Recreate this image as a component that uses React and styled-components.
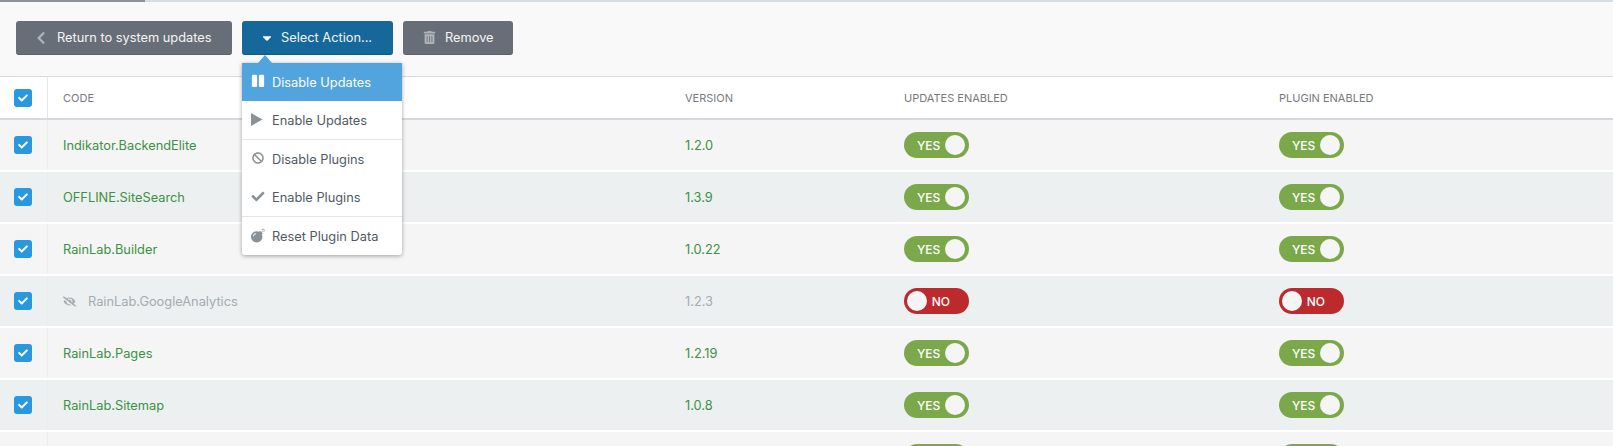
import React from 'react'
import styled, { createGlobalStyle } from 'styled-components'
import {
  FaBan,
  FaBomb,
  FaCaretDown,
  FaCheck,
  FaChevronLeft,
  FaEyeSlash,
  FaPause,
  FaTrashAlt,
} from 'react-icons/fa'

const GlobalStyle = createGlobalStyle`
  html, body {
    margin: 0;
    padding: 0;
    height: 446px;
    overflow: hidden;
    background: #f5f5f5;
    font-family: Inter, "Liberation Sans", sans-serif;
  }
`

const Progress = styled.div`
  display: flex;
  height: 2px;
  background: #d6dde6;
  span {
    width: 145px;
    background: #8f939c;
  }
`

const Toolbar = styled.div`
  display: flex;
  gap: 10px;
  height: 75px;
  padding: 19px 0 0 16px;
  box-sizing: border-box;
  background: #f9f9f9;
  border-bottom: 1px solid #d7dadd;
`

const Button = styled.button`
  display: flex;
  align-items: center;
  width: ${p => p.$width}px;
  height: 34px;
  padding: 0 0 0 ${p => p.$pad}px;
  gap: ${p => p.$gap}px;
  border: 0;
  border-bottom: 1px solid ${p => (p.$primary ? '#125a86' : '#5b616a')};
  border-radius: 3px;
  background: ${p => (p.$primary ? '#16689a' : '#686e78')};
  color: #f4f5f6;
  font: 400 12.8px Inter, "Liberation Sans", sans-serif;
  white-space: nowrap;
  svg {
    flex: none;
    color: ${p => (p.$primary ? '#ffffff' : '#b0b4ba')};
  }
`

const ActionWrap = styled.div`
  position: relative;
`

const Dropdown = styled.div`
  position: absolute;
  z-index: 5;
  top: 42px;
  left: 0;
  width: 160px;
  background: #fff;
  border-radius: 0 0 3px 3px;
  box-shadow: 0 1px 4px rgba(0, 0, 0, 0.35);
  &::before {
    content: '';
    position: absolute;
    top: -8px;
    left: 16px;
    border-left: 7px solid transparent;
    border-right: 7px solid transparent;
    border-bottom: 8px solid #51a4de;
  }
`

const MenuItem = styled.div`
  display: flex;
  align-items: center;
  height: 38px;
  padding-left: 9px;
  background: ${p => (p.$active ? '#51a4de' : 'transparent')};
  color: ${p => (p.$active ? '#ffffff' : '#4f5a65')};
  font-size: 12.8px;
  border-top: ${p => (p.$divided ? '1px solid #e3e5e7' : '0')};
  svg {
    flex: none;
    width: 14px;
    margin: -2px 7px 0 0;
    color: ${p => (p.$active ? '#ffffff' : '#8a9298')};
  }
`

const Columns = styled.div`
  display: grid;
  grid-template-columns: 48px 622px 219px 375px 1fr;
`

const Header = styled(Columns)`
  height: 41px;
  background: #fff;
  border-bottom: 2px solid #d5d9dd;
`

const HeadCell = styled.div`
  display: flex;
  align-items: center;
  padding-left: 15px;
  color: #777a7d;
  font-size: 11px;
  text-transform: uppercase;
`

const Row = styled(Columns)`
  height: 50px;
  border-bottom: 2px solid #fff;
  background: ${p => (p.$alt ? '#ecf0f1' : '#f5f5f5')};
`

const CheckCell = styled.div`
  display: flex;
  align-items: center;
  padding-left: 14px;
  border-right: 1px solid ${p => (p.$head ? '#e6e6e6' : '#ececec')};
`

const Checkbox = styled.span`
  display: flex;
  align-items: center;
  justify-content: center;
  width: 18px;
  height: 18px;
  border-radius: 3px;
  background: #2a98de;
  color: #fff;
`

const Cell = styled.div`
  display: flex;
  align-items: center;
  gap: 12px;
  padding-left: 15px;
  color: ${p => (p.$muted ? '#a4acaf' : '#3c9143')};
  font-size: 12.8px;
  svg {
    color: #a4acaf;
  }
`

const Switch = styled.span`
  display: flex;
  align-items: center;
  flex-direction: ${p => (p.$on ? 'row' : 'row-reverse')};
  justify-content: space-between;
  box-sizing: border-box;
  width: 65px;
  height: 26px;
  padding: ${p => (p.$on ? '0 4px 0 13px' : '0 19px 0 3px')};
  border-radius: 13px;
  background: ${p => (p.$on ? '#7ba84b' : '#bc2a2d')};
  color: #fff;
  font-size: 12px;
  font-weight: 500;
  &::after {
    content: '';
    width: 20px;
    height: 20px;
    border-radius: 50%;
    background: #f5f5f5;
  }
`

const plugins = [
  { code: 'Indikator.BackendElite', version: '1.2.0', on: true },
  { code: 'OFFLINE.SiteSearch', version: '1.3.9', on: true },
  { code: 'RainLab.Builder', version: '1.0.22', on: true },
  { code: 'RainLab.GoogleAnalytics', version: '1.2.3', on: false },
  { code: 'RainLab.Pages', version: '1.2.19', on: true },
  { code: 'RainLab.Sitemap', version: '1.0.8', on: true },
  { code: '', version: '', on: true },
]

const Toggle = ({ on }) => <Switch $on={on}>{on ? 'YES' : 'NO'}</Switch>

const Tick = () => (
  <Checkbox>
    <FaCheck size={10} />
  </Checkbox>
)

const PlayIcon = () => (
  <svg height="13" viewBox="0 0 14 13" fill="currentColor">
    <polygon points="0,0 11.5,6.5 0,13" />
  </svg>
)

export default function App() {
  return (
    <>
      <GlobalStyle />
      <Progress>
        <span />
      </Progress>
      <Toolbar>
        <Button $width={216} $pad={18} $gap={9}>
          <FaChevronLeft size={14} />
          Return to system updates
        </Button>
        <ActionWrap>
          <Button $primary $width={151} $pad={18} $gap={7}>
            <FaCaretDown size={14} />
            Select Action...
          </Button>
          <Dropdown>
            <MenuItem $active>
              <FaPause size={14} />
              Disable Updates
            </MenuItem>
            <MenuItem>
              <PlayIcon />
              Enable Updates
            </MenuItem>
            <MenuItem $divided>
              <FaBan size={12} />
              Disable Plugins
            </MenuItem>
            <MenuItem>
              <FaCheck size={13} />
              Enable Plugins
            </MenuItem>
            <MenuItem $divided>
              <FaBomb size={15} />
              Reset Plugin Data
            </MenuItem>
          </Dropdown>
        </ActionWrap>
        <Button $width={110} $pad={20} $gap={9}>
          <FaTrashAlt size={13} />
          Remove
        </Button>
      </Toolbar>
      <Header>
        <CheckCell $head>
          <Tick />
        </CheckCell>
        <HeadCell>Code</HeadCell>
        <HeadCell>Version</HeadCell>
        <HeadCell>Updates enabled</HeadCell>
        <HeadCell>Plugin enabled</HeadCell>
      </Header>
      {plugins.map((p, i) => (
        <Row key={i} $alt={i % 2 === 1}>
          <CheckCell>{p.code && <Tick />}</CheckCell>
          <Cell $muted={!p.on}>
            {!p.on && <FaEyeSlash size={13} />}
            {p.code}
          </Cell>
          <Cell $muted={!p.on}>{p.version}</Cell>
          <Cell>
            <Toggle on={p.on} />
          </Cell>
          <Cell>
            <Toggle on={p.on} />
          </Cell>
        </Row>
      ))}
    </>
  )
}
